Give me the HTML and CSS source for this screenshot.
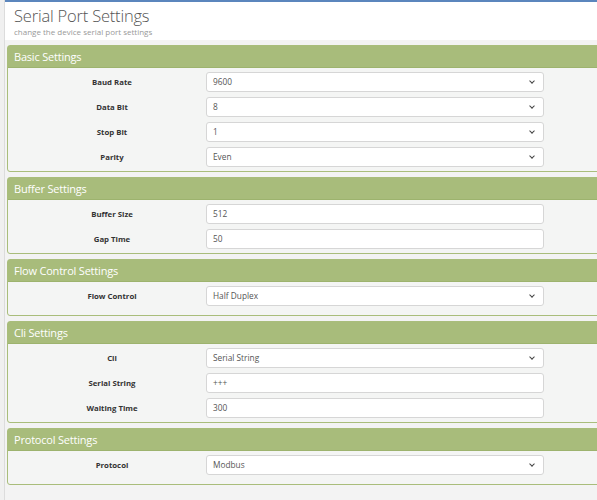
FILE: index.html
```html
<!DOCTYPE html>
<html lang="en">
<head>
    <meta charset="UTF-8">
    <title>Serial Port Settings</title>
    <link rel="stylesheet" href="styles.css">
</head>
<body>
    <div class="sidebar"></div>
    <div class="main">
        <div class="page-header">
            <h1>Serial Port Settings</h1>
            <p>change the device serial port settings</p>
        </div>

        <div class="content">
            <div class="panel">
                <div class="panel-heading">Basic Settings</div>
                <div class="panel-body">
                    <div class="form-row">
                        <label>Baud Rate</label>
                        <div class="field select">9600</div>
                    </div>
                    <div class="form-row">
                        <label>Data Bit</label>
                        <div class="field select">8</div>
                    </div>
                    <div class="form-row">
                        <label>Stop Bit</label>
                        <div class="field select">1</div>
                    </div>
                    <div class="form-row">
                        <label>Parity</label>
                        <div class="field select">Even</div>
                    </div>
                </div>
            </div>

            <div class="panel">
                <div class="panel-heading">Buffer Settings</div>
                <div class="panel-body">
                    <div class="form-row">
                        <label>Buffer Size</label>
                        <div class="field">512</div>
                    </div>
                    <div class="form-row">
                        <label>Gap Time</label>
                        <div class="field">50</div>
                    </div>
                </div>
            </div>

            <div class="panel">
                <div class="panel-heading">Flow Control Settings</div>
                <div class="panel-body panel-body-tall">
                    <div class="form-row">
                        <label>Flow Control</label>
                        <div class="field select">Half Duplex</div>
                    </div>
                </div>
            </div>

            <div class="panel">
                <div class="panel-heading">Cli Settings</div>
                <div class="panel-body">
                    <div class="form-row">
                        <label>Cli</label>
                        <div class="field select">Serial String</div>
                    </div>
                    <div class="form-row">
                        <label>Serial String</label>
                        <div class="field">+++</div>
                    </div>
                    <div class="form-row">
                        <label>Waiting Time</label>
                        <div class="field">300</div>
                    </div>
                </div>
            </div>

            <div class="panel">
                <div class="panel-heading">Protocol Settings</div>
                <div class="panel-body panel-body-tall">
                    <div class="form-row">
                        <label>Protocol</label>
                        <div class="field select">Modbus</div>
                    </div>
                </div>
            </div>
        </div>
    </div>
</body>
</html>
```

FILE: styles.css
```css
* {
    margin: 0;
    padding: 0;
    box-sizing: border-box;
}

body {
    font-family: 'Open Sans', 'Noto Sans', sans-serif;
    background-color: #f3f3f3;
    display: flex;
    width: 597px;
    height: 500px;
    overflow: hidden;
}

.sidebar {
    width: 5px;
    flex-shrink: 0;
    background-color: #f0f0f0;
    border-right: 1px solid #dcdcdc;
}

.main {
    flex: 1;
    min-width: 0;
    border-top: 2px solid #5b86bd;
    overflow: hidden;
}

.page-header {
    background-color: #ffffff;
    height: 38px;
    padding: 4px 0 0 9px;
}

.page-header h1 {
    font-size: 16.5px;
    font-weight: 300;
    line-height: 20px;
    color: #555555;
    letter-spacing: -0.2px;
}

.page-header p {
    font-size: 8px;
    line-height: 11px;
    color: #999999;
}

.content {
    padding: 5px 0 0 2px;
    width: 660px;
}

.panel {
    border: 1px solid #a9bd7b;
    border-radius: 3px;
    margin-bottom: 5px;
    background-color: #f4f5f4;
}

.panel-heading {
    background-color: #a8bc7b;
    border-bottom: 1px solid #9db36e;
    color: #ffffff;
    font-size: 11px;
    line-height: 21px;
    height: 22px;
    padding-left: 6px;
    letter-spacing: -0.2px;
}

.panel-body {
    padding: 1px 0 2px;
}

.panel-body-tall {
    padding-bottom: 7px;
}

.form-row {
    display: flex;
    align-items: center;
    height: 25px;
}

.form-row label {
    width: 198px;
    text-align: center;
    font-size: 7.8px;
    font-weight: 700;
    color: #333333;
    padding-left: 10px;
}

.field {
    width: 338px;
    height: 20px;
    background-color: #ffffff;
    border: 1px solid #d6d6d6;
    border-radius: 3px;
    font-size: 8.3px;
    line-height: 18px;
    color: #555555;
    padding-left: 6px;
    position: relative;
}

.select::after {
    content: '';
    position: absolute;
    right: 9px;
    top: 6px;
    width: 3px;
    height: 3px;
    border-right: 1px solid #444444;
    border-bottom: 1px solid #444444;
    transform: rotate(45deg);
}
```
